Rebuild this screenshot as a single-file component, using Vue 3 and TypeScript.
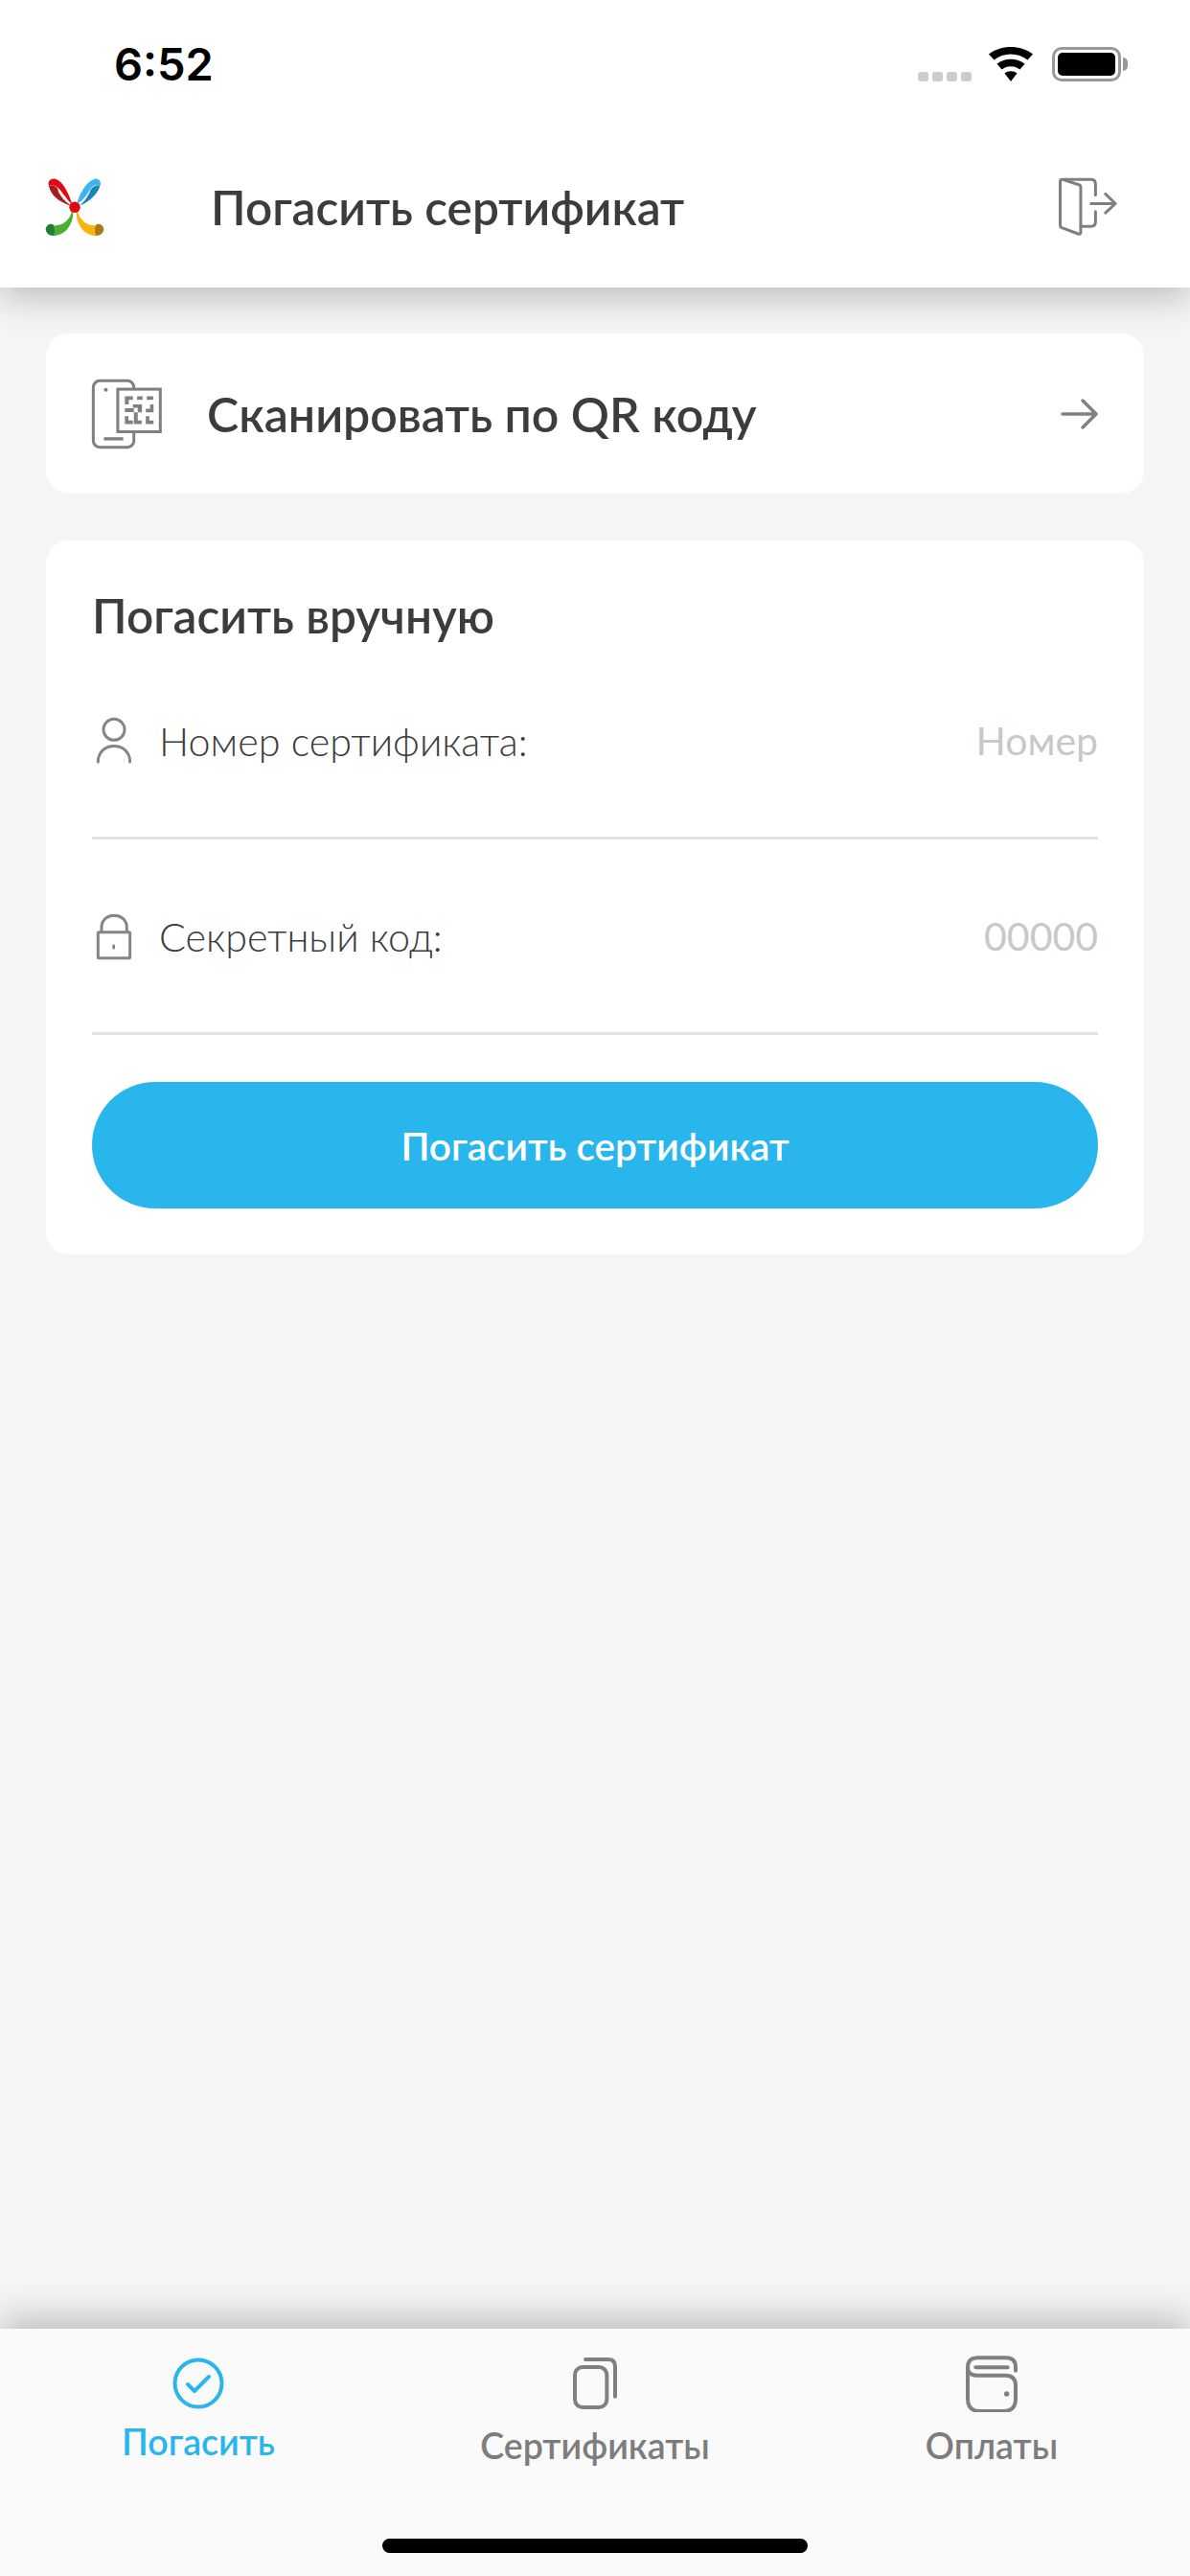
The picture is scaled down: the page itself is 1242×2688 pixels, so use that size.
<template>
  <div class="screen">
    <header class="top">
      <div class="status-bar">
        <span class="time">6:52</span>
        <div class="status-icons">
          <div class="signal"><i></i><i></i><i></i><i></i></div>
          <svg class="wifi" width="50" height="36" viewBox="0 0 50 36">
            <path d="M25 36 L18.5 27.5 C22 24.5 28 24.5 31.5 27.5 Z" fill="#000" />
            <path d="M15.5 23.5 L10.5 17.5 C18.5 11 31.5 11 39.5 17.5 L34.5 23.5 C29 19 21 19 15.5 23.5 Z" fill="#000" />
            <path d="M7.5 13.5 L2 7.5 C14.5 -2.5 35.5 -2.5 48 7.5 L42.5 13.5 C32.5 5.5 17.5 5.5 7.5 13.5 Z" fill="#000" />
          </svg>
          <div class="battery">
            <div class="battery-body"><div class="battery-level"></div></div>
            <div class="battery-nub"></div>
          </div>
        </div>
      </div>
      <div class="nav-bar">
        <svg class="logo" width="64" height="64" viewBox="80 70 190 190">
          <path d="M95 100 C105 95 116 100 122 108 C125 125 140 145 165 162 C130 152 100 130 95 100 Z" fill="#a51d1d" />
          <path d="M95 100 C90 85 100 76 115 78 C138 84 155 120 168 158 C150 140 140 125 130 112 C120 100 105 95 95 100 Z" fill="#e30613" />
          <path d="M254 98 C246 125 220 150 190 160 C205 148 218 130 224 112 C230 102 242 96 254 98 Z" fill="#1687b8" />
          <path d="M182 155 C190 120 215 82 238 78 C250 76 258 88 254 98 C240 94 228 100 222 112 C212 130 200 145 182 155 Z" fill="#3fb4e9" />
          <path d="M110 222 C104 214 88 218 85 232 C85 245 95 255 110 254 C114 245 116 232 110 222 Z" fill="#217f36" />
          <path d="M165 180 C160 206 135 225 110 222 C116 232 114 245 108 254 C142 254 168 225 170 185 Z" fill="#4bae35" />
          <path d="M240 222 C246 214 262 218 265 232 C265 245 255 255 240 254 C236 245 234 232 240 222 Z" fill="#a97a16" />
          <path d="M185 180 C190 206 215 225 240 222 C234 232 236 245 242 254 C208 254 182 225 180 185 Z" fill="#fbb30b" />
          <circle cx="175" cy="166" r="17" fill="#e30613" />
        </svg>
        <h1 class="nav-title">Погасить сертификат</h1>
        <svg class="exit" width="64" height="62" viewBox="130 435 190 185" fill="none" stroke="#7f7f7f" stroke-width="9" stroke-linecap="round" stroke-linejoin="round">
          <path d="M148 442 L198 458 Q204 460 204 466 V606 Q204 614 196 611 L145 592 Q140 590 140 584 V448 Q140 440 148 442 Z" />
          <path d="M150 442 H236 Q250 442 250 456 V490" />
          <path d="M250 542 V574 Q250 588 236 588 H204" />
          <path d="M236 517 H312 M281 487 L312 517 L281 546" />
        </svg>
      </div>
    </header>

    <main class="content">
      <section class="card scan-card">
        <svg class="qr" width="74" height="74" viewBox="75 75 220 220">
          <rect x="82" y="82" width="126" height="206" rx="20" fill="#fff" stroke="#808080" stroke-width="9" />
          <circle cx="121" cy="110" r="6" fill="#808080" />
          <rect x="115" y="257" width="60" height="10" fill="#808080" />
          <rect x="158" y="108" width="132" height="132" fill="#fff" stroke="#808080" stroke-width="9" />
          <g fill="#808080">
            <path d="M180 130 H205 V141 H192 V155 H180 Z" />
            <rect x="218" y="130" width="17" height="11" />
            <rect x="248" y="130" width="20" height="11" />
            <path d="M205 155 H233 V180 H220 V166 H205 Z" />
            <path d="M258 155 H269 V180 H245 V169 H258 Z" />
            <rect x="180" y="167" width="28" height="12" />
            <path d="M180 192 H191 V205 H205 V216 H180 Z" />
            <path d="M208 180 H220 V205 H232 V216 H208 Z" />
            <path d="M245 192 H256 V205 H269 V216 H245 Z" />
          </g>
        </svg>
        <span class="scan-title">Сканировать по QR коду</span>
        <svg class="arrow" width="40" height="34" viewBox="0 0 40 34" fill="none" stroke="#808080" stroke-width="3.5" stroke-linecap="round" stroke-linejoin="round">
          <path d="M2 17 H37 M23 3 L37 17 L23 31" />
        </svg>
      </section>

      <section class="card manual-card">
        <h2 class="manual-title">Погасить вручную</h2>
        <div class="field">
          <svg width="40" height="50" viewBox="60 85 120 150" fill="none" stroke="#858585" stroke-width="9" stroke-linecap="round">
            <circle cx="120" cy="125" r="33" />
            <path d="M70 226 C70 160 170 160 170 226" />
          </svg>
          <span class="field-label">Номер сертификата:</span>
          <span class="field-placeholder">Номер</span>
        </div>
        <div class="field">
          <svg width="40" height="50" viewBox="60 695 120 150" fill="none" stroke="#858585" stroke-width="9" stroke-linejoin="round">
            <rect x="70" y="757" width="100" height="81" rx="3" />
            <path d="M81 757 V742 C81 692 160 692 160 742 V757" />
            <path d="M119 796 V810" stroke-width="8" />
          </svg>
          <span class="field-label">Секретный код:</span>
          <span class="field-placeholder">00000</span>
        </div>
        <button class="submit">Погасить сертификат</button>
      </section>
    </main>

    <nav class="tabs">
      <div class="tab active">
        <svg width="60" height="60" viewBox="17 27 60 60" fill="none" stroke="#29b6ec" stroke-width="4" stroke-linecap="round" stroke-linejoin="round">
          <circle cx="47" cy="57" r="24.5" />
          <path d="M36 58 L43 65 L58 50" />
        </svg>
        <span class="tab-label">Погасить</span>
      </div>
      <div class="tab">
        <svg width="60" height="60" viewBox="65 85 180 180" fill="none" stroke="#808080" stroke-width="12" stroke-linecap="round">
          <rect x="92" y="124" width="100" height="126" rx="24" />
          <path d="M125 100 H196 Q218 100 218 122 V216" />
        </svg>
        <span class="tab-label">Сертификаты</span>
      </div>
      <div class="tab">
        <svg width="60" height="60" viewBox="75 85 180 180" fill="none" stroke="#808080" stroke-width="12" stroke-linecap="round">
          <path d="M240 135 V124 Q240 95 210 95 H120 Q90 95 90 125 V224 Q90 262 128 262 H202 Q240 262 240 224 V182 Q240 150 208 150 H118 Q90 150 90 125" />
          <path d="M115 125 H215" />
          <circle cx="212" cy="208" r="8" fill="#808080" stroke="none" />
        </svg>
        <span class="tab-label">Оплаты</span>
      </div>
      <div class="home-indicator"></div>
    </nav>
  </div>
</template>

<script setup lang="ts">
</script>

<style>
body {
  margin: 0;
}
</style>

<style scoped>
.screen {
  width: 1242px;
  height: 2688px;
  display: flex;
  flex-direction: column;
  overflow: hidden;
  background: #f5f5f5;
  font-family: Lato, "Noto Sans", sans-serif;
  color: #3c3c3c;
}

.top {
  position: relative;
  z-index: 1;
  height: 300px;
  background: #fff;
  box-shadow: 0 10px 36px rgba(0, 0, 0, 0.24);
}

.status-bar {
  height: 132px;
  display: flex;
  justify-content: space-between;
  align-items: flex-start;
  padding: 0 65px 0 119px;
}

.time {
  margin-top: 39px;
  font-family: Inter, sans-serif;
  font-size: 47px;
  line-height: 56px;
  font-weight: 600;
  color: #000;
}

.status-icons {
  display: flex;
  align-items: flex-start;
  margin-top: 49px;
}

.signal {
  display: flex;
  gap: 4px;
  margin-top: 26px;
  margin-right: 16px;
}

.signal i {
  width: 11px;
  height: 10px;
  border-radius: 3px;
  background: #cccccc;
}

.wifi {
  margin-right: 18px;
}

.battery {
  display: flex;
  align-items: center;
  height: 36px;
}

.battery-body {
  width: 72px;
  height: 36px;
  box-sizing: border-box;
  border: 3px solid #999;
  border-radius: 10px;
  padding: 3px;
}

.battery-level {
  height: 100%;
  border-radius: 5px;
  background: #000;
}

.battery-nub {
  width: 5px;
  height: 14px;
  margin-left: 2px;
  border-radius: 0 5px 5px 0;
  background: #999;
}

.nav-bar {
  height: 168px;
  display: flex;
  align-items: center;
  padding: 0 75px 0 46px;
}

.nav-title {
  flex: 1;
  margin: 0 0 0 110px;
  font-size: 49.5px;
  font-weight: 600;
}

.content {
  flex: 1;
  display: flex;
  flex-direction: column;
  gap: 49px;
  padding: 48px;
}

.card {
  background: #fff;
  border-radius: 24px;
}

.scan-card {
  height: 167px;
  display: flex;
  align-items: center;
  padding: 0 47px;
}

.scan-title {
  flex: 1;
  margin-left: 47px;
  font-size: 50px;
  font-weight: 600;
}

.manual-card {
  padding: 48px;
}

.manual-title {
  margin: 0 0 22px;
  font-size: 49.5px;
  line-height: 60px;
  font-weight: 600;
}

.field {
  height: 182px;
  box-sizing: border-box;
  display: flex;
  align-items: flex-start;
  gap: 27px;
  padding: 54px 0 0 3px;
  margin-bottom: 22px;
  border-bottom: 3px solid #e2e2e2;
}

.field + .field {
  margin-bottom: 49px;
}

.field-label {
  flex: 1;
  font-size: 41.3px;
  line-height: 50px;
  font-weight: 300;
}

.field-placeholder {
  font-size: 41px;
  line-height: 50px;
  color: #c8c8cc;
}

.submit {
  display: block;
  width: 100%;
  height: 132px;
  border: none;
  border-radius: 66px;
  background: #29b6ec;
  color: #fff;
  font-family: inherit;
  font-size: 40.6px;
  font-weight: 600;
}

.tabs {
  position: relative;
  z-index: 1;
  height: 258px;
  display: grid;
  grid-template-columns: repeat(3, 1fr);
  align-items: start;
  padding-top: 27px;
  box-sizing: border-box;
  background: #fafafa;
  box-shadow: 0 -10px 36px rgba(0, 0, 0, 0.24);
}

.tab {
  display: flex;
  flex-direction: column;
  align-items: center;
  color: #7d7d7d;
}

.tab-label {
  margin-top: 12px;
  font-size: 37.5px;
  line-height: 46px;
  font-weight: 600;
}

.tab.active {
  color: #29b6ec;
}

.tab.active .tab-label {
  margin-top: 8px;
}

.home-indicator {
  position: absolute;
  left: 399px;
  top: 219px;
  width: 444px;
  height: 15px;
  border-radius: 8px;
  background: #000;
}
</style>
